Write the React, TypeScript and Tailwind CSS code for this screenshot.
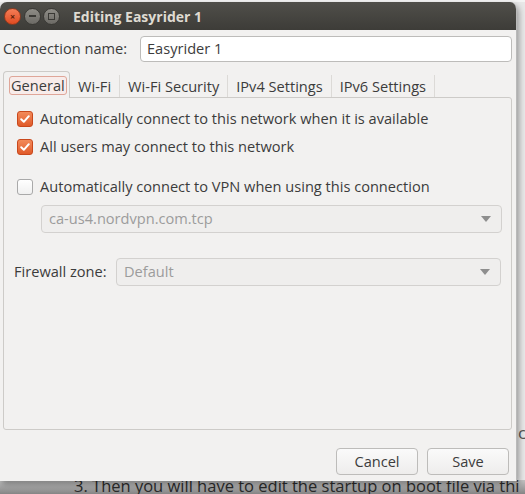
import React from "react";

const font = { fontFamily: '"Open Sans", "Noto Sans", sans-serif' };

function Check({ checked }: { checked: boolean }) {
  if (checked) {
    return (
      <span className="w-[16px] h-[16px] rounded-[3px] border border-[#c9481c] bg-gradient-to-b from-[#f28a5a] to-[#e05a28] flex items-center justify-center shrink-0">
        <svg width="12" height="12" viewBox="0 0 12 12">
          <path d="M2.2 6.3 L4.8 8.8 L9.8 3.2" fill="none" stroke="#fff" strokeWidth="2" strokeLinecap="round" strokeLinejoin="round" />
        </svg>
      </span>
    );
  }
  return <span className="w-[16px] h-[16px] rounded-[3px] border border-[#a9a9a9] bg-gradient-to-b from-[#ffffff] to-[#f0f0f0] shrink-0" />;
}

function Combo({ text, className }: { text: string; className: string }) {
  return (
    <div className={"h-[28px] rounded-[4px] border border-[#d3d1cf] bg-[#efeeed] flex items-center justify-between pl-[7px] pr-[10px] " + className}>
      <span className="text-[14.6px] text-[#9c9c9c]">{text}</span>
      <svg width="10" height="6" viewBox="0 0 10 6"><path d="M0 0 L10 0 L5 6 Z" fill="#8e8e8e" /></svg>
    </div>
  );
}

export default function App() {
  return (
    <div className="relative w-[525px] h-[494px] overflow-hidden bg-[#e8e8e8]" style={font}>
      {/* page behind */}
      <div className="absolute left-0 right-0 top-0 h-[2px] bg-[#f4f4f4]" />
      <div className="absolute left-0 right-0 bottom-0 h-[14px] bg-gradient-to-b from-[#c4c4c4] to-[#858585]" />
      <div className="absolute left-[74px] top-[475px] text-[16.5px] text-[#2a2a2a] whitespace-nowrap leading-[22px]">
        3. Then you will have to edit the startup on boot file via thi
      </div>
      <div className="absolute left-[518px] top-[422px] text-[17px] text-[#555] leading-[22px]">c</div>

      {/* window */}
      <div className="absolute left-0 top-[2px] w-[517px] h-[479px] flex flex-col rounded-t-[7px] overflow-hidden border-r border-[#b9b9b9] shadow-[2px_3px_6px_rgba(0,0,0,0.35)]">
        <div className="h-[28px] bg-gradient-to-b from-[#504f4a] to-[#3d3c38] flex items-center pl-[4px] shrink-0">
          <span className="w-[17px] h-[17px] rounded-full bg-gradient-to-b from-[#f47d56] to-[#df4a1f] border border-[#8d3a1f] flex items-center justify-center text-[9px] leading-none text-[#5a1e08] font-bold">×</span>
          <span className="ml-[3px] w-[17px] h-[17px] rounded-full bg-gradient-to-b from-[#8f8d87] to-[#6c6a65] border border-[#3a3935] flex items-center justify-center">
            <span className="w-[7px] h-[2px] bg-[#3a3935]" />
          </span>
          <span className="ml-[2px] w-[17px] h-[17px] rounded-full bg-gradient-to-b from-[#8f8d87] to-[#6c6a65] border border-[#3a3935] flex items-center justify-center">
            <span className="w-[7px] h-[7px] border border-[#3a3935]" />
          </span>
          <span className="ml-[13px] text-[14px] font-bold text-[#dfdbd2]">Editing Easyrider 1</span>
        </div>
        <div className="flex-1 bg-[#f2f1f0] flex flex-col pl-[3px] pr-[4px] text-[#3c3c3c] text-[14.6px]">
          <div className="flex items-center mt-[6px] h-[26px]">
            <span className="w-[137px]">Connection name:</span>
            <div className="flex-1 h-[26px] rounded-[4px] border border-[#bdbcba] bg-white flex items-center pl-[6px]">Easyrider 1</div>
          </div>

          {/* tabs */}
          <div className="mt-[9px] flex items-end h-[27px]">
            <div className="h-[27px] w-[67px] rounded-t-[4px] border border-b-0 border-[#cdcbc8] bg-[#f2f1f0] flex items-center pl-[5px] relative z-10">
              <span className="border border-[#dfa699] bg-[#f8ecea] rounded-[3px] px-[1px] leading-[17px]">General</span>
            </div>
            <div className="h-[23px] flex items-center px-[8px] border-r border-[#dcdad7]">Wi-Fi</div>
            <div className="h-[23px] flex items-center px-[8px] border-r border-[#dcdad7]">Wi-Fi Security</div>
            <div className="h-[23px] flex items-center px-[8px] border-r border-[#dcdad7]">IPv4 Settings</div>
            <div className="h-[23px] flex items-center px-[8px] border-r border-[#dcdad7]">IPv6 Settings</div>
          </div>

          <div className="h-[333px] -mt-[1px] border border-[#cdcbc8] rounded-b-[3px] rounded-tr-[3px] flex flex-col">
            <div className="flex items-center gap-[7px] mt-[12px] ml-[13px] h-[18px]">
              <Check checked />
              <span>Automatically connect to this network when it is available</span>
            </div>
            <div className="flex items-center gap-[7px] mt-[10px] ml-[13px] h-[18px]">
              <Check checked />
              <span>All users may connect to this network</span>
            </div>
            <div className="flex items-center gap-[7px] mt-[22px] ml-[13px] h-[18px]">
              <Check checked={false} />
              <span>Automatically connect to VPN when using this connection</span>
            </div>
            <Combo text="ca-us4.nordvpn.com.tcp" className="mt-[9px] ml-[37px] w-[461px]" />
            <div className="flex items-center mt-[25px] ml-[10px]">
              <span className="w-[102px]">Firewall zone:</span>
              <Combo text="Default" className="w-[385px]" />
            </div>
          </div>

          <div className="flex justify-end gap-[9px] mt-[18px] pr-[3px]">
            <button className="w-[82px] h-[27px] rounded-[4px] border border-[#bdbcba] bg-gradient-to-b from-[#fafafa] to-[#eeedec] text-[#3c3c3c]">Cancel</button>
            <button className="w-[82px] h-[27px] rounded-[4px] border border-[#bdbcba] bg-gradient-to-b from-[#fafafa] to-[#eeedec] text-[#3c3c3c]">Save</button>
          </div>
        </div>
      </div>
    </div>
  );
}
